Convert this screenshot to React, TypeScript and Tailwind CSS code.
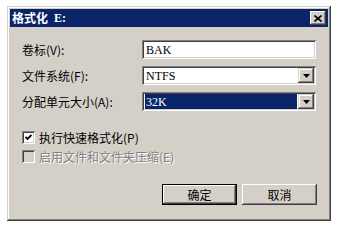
import React from "react";

const cjk = { fontFamily: '"Noto Sans CJK SC", "Liberation Sans", sans-serif' };
const serif = { fontFamily: '"Liberation Serif", "DejaVu Serif", serif' };

function Sunken({ children, className = "" }: { children?: React.ReactNode; className?: string }) {
  return (
    <div
      className={
        "shadow-[inset_1px_1px_0_#808080,inset_-1px_-1px_0_#ffffff,inset_2px_2px_0_#404040,inset_-2px_-2px_0_#d4d0c8] " +
        className
      }
    >
      {children}
    </div>
  );
}

function Arrow() {
  return (
    <div className="w-[16px] h-[15px] bg-[#d4d0c8] flex items-center justify-center shadow-[inset_-1px_-1px_0_#404040,inset_1px_1px_0_#d4d0c8,inset_-2px_-2px_0_#808080,inset_2px_2px_0_#ffffff]">
      <svg width="7" height="4" viewBox="0 0 7 4">
        <path d="M0 0H7L3.5 4Z" fill="#000" />
      </svg>
    </div>
  );
}

function Row({ label, children }: { label: string; children: React.ReactNode }) {
  return (
    <div className="flex items-center h-[19px]">
      <div className="w-[120px] text-[12px] leading-none text-black" style={cjk}>
        {label}
      </div>
      <div className="flex-1">{children}</div>
    </div>
  );
}

function Button({ label, def }: { label: string; def?: boolean }) {
  return (
    <div
      className={
        "w-[75px] h-[21px] bg-[#d4d0c8] flex items-center justify-center text-[12px] text-black " +
        (def
          ? "shadow-[inset_1px_1px_0_#000,inset_-1px_-1px_0_#000,inset_-2px_-2px_0_#404040,inset_2px_2px_0_#ffffff,inset_-3px_-3px_0_#808080]"
          : "shadow-[inset_-1px_-1px_0_#404040,inset_1px_1px_0_#ffffff,inset_-2px_-2px_0_#808080]")
      }
      style={cjk}
    >
      {label}
    </div>
  );
}

export default function App() {
  return (
    <div className="w-[338px] h-[231px] bg-white pt-[6px] pl-[7px]">
      <div className="w-[324px] h-[215px] bg-[#d4d0c8] p-[3px] flex flex-col shadow-[inset_-1px_-1px_0_#404040,inset_1px_1px_0_#d4d0c8,inset_-2px_-2px_0_#808080,inset_2px_2px_0_#ffffff]">
        <div className="h-[18px] bg-[#0a246a] flex items-center justify-between pl-[2px] pr-[2px]">
          <div className="text-white font-bold text-[12px] leading-none flex items-center" style={cjk}>
            <span>格式化</span>
            <span className="ml-[6px] text-[12px]" style={serif}>E:</span>
          </div>
          <div className="w-[16px] h-[14px] bg-[#d4d0c8] flex items-center justify-center shadow-[inset_-1px_-1px_0_#404040,inset_1px_1px_0_#ffffff,inset_-2px_-2px_0_#808080]">
            <svg width="8" height="7" viewBox="0 0 8 7">
              <path d="M0.5 0.5L7.5 6.5M7.5 0.5L0.5 6.5" stroke="#000" strokeWidth="1.6" />
            </svg>
          </div>
        </div>

        <div className="flex-1 flex flex-col pl-[12px] pr-[12px] pt-[13px]">
          <div className="flex flex-col gap-[7px]">
            <Row label="卷标(V):">
              <Sunken className="h-[19px] bg-white flex items-center pl-[4px]">
                <span className="text-[12px] leading-none text-black" style={serif}>BAK</span>
              </Sunken>
            </Row>
            <Row label="文件系统(F):">
              <Sunken className="h-[19px] bg-white flex items-center justify-between pl-[4px] pr-[2px]">
                <span className="text-[12px] leading-none text-black" style={serif}>NTFS</span>
                <Arrow />
              </Sunken>
            </Row>
            <Row label="分配单元大小(A):">
              <Sunken className="h-[19px] bg-white flex items-center pl-[3px] pr-[2px] py-[2px]">
                <div className="flex-1 h-full bg-[#0a246a] flex items-center pl-[1px] mr-[1px]">
                  <span className="text-[12px] leading-none text-white" style={serif}>32K</span>
                </div>
                <Arrow />
              </Sunken>
            </Row>
          </div>

          <div className="flex flex-col gap-[6px] mt-[20px]">
            <div className="flex items-center h-[13px]">
              <Sunken className="w-[13px] h-[13px] bg-white flex items-center justify-center">
                <svg width="7" height="7" viewBox="0 0 7 7">
                  <path d="M0.5 3L2.5 5L6.5 1" stroke="#000" strokeWidth="1.8" fill="none" />
                </svg>
              </Sunken>
              <span className="ml-[4px] text-[12px] leading-none text-black" style={cjk}>执行快速格式化(P)</span>
            </div>
            <div className="flex items-center h-[13px]">
              <Sunken className="w-[13px] h-[13px] bg-[#d4d0c8]" />
              <span
                className="ml-[4px] text-[12px] leading-none text-[#808080] [text-shadow:1px_1px_0_#ffffff]"
                style={cjk}
              >
                启用文件和文件夹压缩(E)
              </span>
            </div>
          </div>

          <div className="flex justify-end gap-[5px] mt-[21px] mr-[-1px]">
            <Button label="确定" def />
            <Button label="取消" />
          </div>
        </div>
      </div>
    </div>
  );
}
